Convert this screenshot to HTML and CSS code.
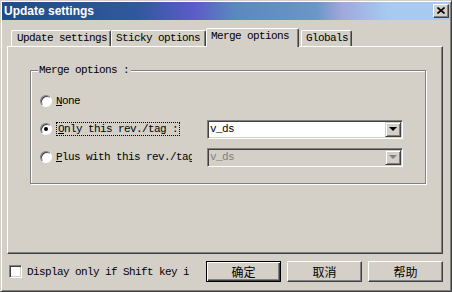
FILE: index.html
```html
<!DOCTYPE html>
<html lang="en">
<head>
    <meta charset="UTF-8">
    <title>Update settings</title>
    <link rel="stylesheet" href="styles.css">
</head>
<body>
    <div class="window">
        <div class="titlebar">
            <span class="title">Update settings</span>
            <span class="close-btn">
                <svg width="8" height="7" viewBox="0 0 8 7">
                    <path d="M0.5 0.5 L7.5 6.5 M7.5 0.5 L0.5 6.5" stroke="#000" stroke-width="1.6"/>
                </svg>
            </span>
        </div>

        <div class="tabs">
            <div class="tab tab-update">Update settings</div>
            <div class="tab tab-sticky">Sticky options</div>
            <div class="tab tab-active">Merge options</div>
            <div class="tab tab-globals">Globals</div>
        </div>

        <div class="panel">
            <div class="group">
                <span class="group-title">Merge options :</span>

                <div class="option-row">
                    <span class="radio"></span>
                    <span class="option-label"><u>N</u>one</span>
                </div>

                <div class="option-row">
                    <span class="radio checked"></span>
                    <span class="option-label"><span class="focus"><u>O</u>nly this rev./tag :</span></span>
                    <div class="combo">
                        <span class="combo-text">v_ds</span>
                        <span class="combo-arrow"><span class="triangle"></span></span>
                    </div>
                </div>

                <div class="option-row">
                    <span class="radio"></span>
                    <span class="option-label"><u>P</u>lus with this rev./tag :</span>
                    <div class="combo disabled">
                        <span class="combo-text">v_ds</span>
                        <span class="combo-arrow"><span class="triangle"></span></span>
                    </div>
                </div>
            </div>
        </div>

        <div class="footer">
            <div class="check-label">
                <span class="checkbox"></span>
                <span class="check-text">Display only if Shift key is down</span>
            </div>
            <button class="btn btn-default">确定</button>
            <button class="btn">取消</button>
            <button class="btn">帮助</button>
        </div>
    </div>
</body>
</html>
```

FILE: styles.css
```css
body {
    margin: 0;
    background-color: #d4d0c8;
    font-family: "Liberation Mono", monospace;
    font-size: 11px;
    letter-spacing: -0.6px;
}
.window {
    box-sizing: border-box;
    width: 452px;
    height: 292px;
    padding: 1px;
    background-color: #d4d0c8;
    border: 1px solid;
    border-color: #d4d0c8 #404040 #404040 #d4d0c8;
    box-shadow: inset 1px 1px #fff, inset -1px -1px #808080;
}
.titlebar {
    height: 18px;
    display: flex;
    align-items: center;
    justify-content: space-between;
    background: linear-gradient(to right, #1f4c8c 0%, #30589e 30%, #5c5cc8 43%, #5a88c0 52%, #6a96c8 70%, #a0a8dc 76%, #a6caf0 86%, #a6caf0 100%);
}
.title {
    padding-left: 2px;
    color: white;
    font-family: "Liberation Sans", Arial, sans-serif;
    font-weight: bold;
    font-size: 12px;
    letter-spacing: 0;
}
.close-btn {
    box-sizing: border-box;
    width: 16px;
    height: 14px;
    margin-right: 1px;
    margin-top: -1px;
    display: flex;
    align-items: center;
    justify-content: center;
    background-color: #d4d0c8;
    border: 1px solid;
    border-color: #fff #404040 #404040 #fff;
    box-shadow: inset -1px -1px #808080;
}

/* abas */
.tabs {
    position: relative;
    z-index: 1;
    height: 18px;
    margin-top: 8px;
    padding-left: 9px;
    display: flex;
    align-items: flex-end;
}
.tab {
    box-sizing: border-box;
    height: 16px;
    padding: 0 4px;
    line-height: 14px;
    white-space: nowrap;
    background-color: #d4d0c8;
    border-top: 1px solid #fff;
    border-left: 1px solid #fff;
    border-right: 1px solid #404040;
    border-radius: 2px 2px 0 0;
    box-shadow: inset -1px 0 #808080;
}
.tab-update { width: 100px; padding-left: 5px; }
.tab-sticky { width: 95px; }
.tab-active {
    width: 93px;
    height: 19px;
    margin-bottom: -1px;
    line-height: 15px;
}
.tab-globals { width: 51px; margin-left: 2px; }

.panel {
    box-sizing: border-box;
    width: 436px;
    height: 208px;
    margin-left: 5px;
    border: 1px solid;
    border-color: #fff #404040 #404040 #fff;
    box-shadow: inset -1px -1px #808080;
}

/* grupo de opcoes */
.group {
    position: relative;
    box-sizing: border-box;
    width: 396px;
    height: 114px;
    margin: 23px 0 0 22px;
    padding: 16px 0 0 9px;
    border: 1px solid #808080;
    box-shadow: 1px 1px 0 #fff, inset 1px 1px 0 #fff;
}
.group-title {
    position: absolute;
    top: -7px;
    left: 7px;
    padding: 0 2px 0 1px;
    line-height: 12px;
    background-color: #d4d0c8;
}
.option-row {
    height: 28px;
    display: flex;
    align-items: center;
}
.radio {
    box-sizing: border-box;
    width: 12px;
    height: 12px;
    margin-right: 4px;
    flex-shrink: 0;
    display: flex;
    align-items: center;
    justify-content: center;
    border-radius: 50%;
    background-color: #fff;
    border: 1px solid;
    border-color: #808080 #fff #fff #808080;
    box-shadow: inset 1px 1px #404040;
}
.radio.checked::after {
    content: "";
    width: 4px;
    height: 4px;
    border-radius: 50%;
    background-color: #000;
}
.option-label {
    width: 136px;
    overflow: hidden;
    white-space: nowrap;
    line-height: 14px;
}
.focus {
    display: inline-block;
    padding: 0 1px;
    line-height: 12px;
    border: 1px dotted #000;
}

/* combos */
.combo {
    box-sizing: border-box;
    width: 196px;
    height: 19px;
    margin-left: 15px;
    padding: 1px;
    display: flex;
    background-color: #fff;
    border: 1px solid;
    border-color: #808080 #fff #fff #808080;
    box-shadow: inset 1px 1px #404040, inset -1px -1px #d4d0c8;
}
.combo-text {
    flex: 1;
    padding-left: 1px;
    line-height: 15px;
}
.combo-arrow {
    box-sizing: border-box;
    width: 16px;
    height: 15px;
    display: flex;
    align-items: center;
    justify-content: center;
    background-color: #d4d0c8;
    border: 1px solid;
    border-color: #d4d0c8 #404040 #404040 #d4d0c8;
    box-shadow: inset 1px 1px #fff, inset -1px -1px #808080;
}
.triangle {
    width: 0;
    height: 0;
    border-left: 4px solid transparent;
    border-right: 4px solid transparent;
    border-top: 4px solid #000;
}
.combo.disabled {
    background-color: #d4d0c8;
}
.combo.disabled .combo-text {
    color: #808080;
}
.combo.disabled .triangle {
    border-top-color: #808080;
}

/* rodape */
.footer {
    height: 21px;
    margin-top: 7px;
    padding-left: 7px;
    display: flex;
    align-items: center;
}
.check-label {
    width: 180px;
    margin-right: 17px;
    display: flex;
    align-items: center;
    overflow: hidden;
    white-space: nowrap;
}
.checkbox {
    box-sizing: border-box;
    width: 13px;
    height: 13px;
    margin-right: 5px;
    flex-shrink: 0;
    background-color: #fff;
    border: 1px solid;
    border-color: #808080 #fff #fff #808080;
    box-shadow: inset 1px 1px #404040, inset -1px -1px #d4d0c8;
}
.btn {
    box-sizing: border-box;
    width: 75px;
    height: 21px;
    margin: 0 6px 0 0;
    padding: 0;
    font-family: "Noto Sans CJK SC", sans-serif;
    font-size: 12px;
    letter-spacing: 0;
    color: #000;
    background-color: #d4d0c8;
    border: 1px solid;
    border-color: #fff #404040 #404040 #fff;
    box-shadow: inset -1px -1px #808080;
}
.btn-default {
    border-color: #000;
    box-shadow: inset 1px 1px #fff, inset -1px -1px #404040, inset -2px -2px #808080;
}
```
